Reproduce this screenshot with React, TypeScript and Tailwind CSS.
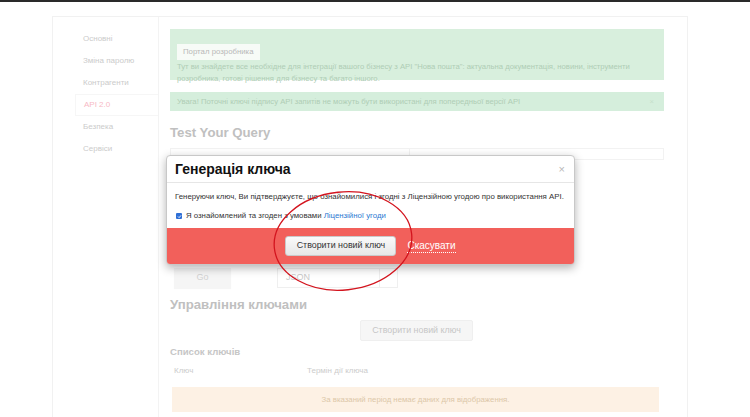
import React from "react";

const font = { fontFamily: '"Liberation Sans", Arial, "Noto Sans", sans-serif' };

export default function App() {
  const side = ["Основні", "Зміна паролю", "Контрагенти", "API 2.0", "Безпека", "Сервіси"];
  return (
    <div className="relative w-[750px] h-[417px] overflow-hidden bg-white" style={font}>
      <div className="h-[2px] bg-[#2a2a2a]" />
      <div className="ml-[52px] mt-[14px] w-[636px] h-[420px] border border-[#f1f1f1] flex">
        {/* sidebar */}
        <div className="w-[106px] border-r border-[#f3f3f3] pt-[11px]">
          {side.map((s) =>
            s === "API 2.0" ? (
              <div
                key={s}
                className="h-[22px] flex items-center ml-[22px] pl-[8px] text-[8px] text-[#f7b9c5] border-y border-l border-[#f6f6f6]"
              >
                {s}
              </div>
            ) : (
              <div key={s} className="h-[22px] flex items-center pl-[30px] text-[8px] text-[#cbcbcb]">
                {s}
              </div>
            )
          )}
        </div>
        {/* content */}
        <div className="flex-1 pl-[11px] pr-[23px] pt-[12px] flex flex-col">
          <div className="h-[51px] bg-[#d8efdd] pl-[7px] pr-[20px] pt-[8px]">
            <div className="inline-flex h-[16px] items-center px-[6px] bg-[#f7fbf7] text-[7.8px] text-[#b8b8b8]">
              Портал розробника
            </div>
            <div className="text-[7.7px] leading-[12px] text-[#afcdb5]">
              Тут ви знайдете все необхідне для інтеграції вашого бізнесу з API "Нова пошта": актуальна документація, новини, інструменти розробника, готові рішення для бізнесу та багато іншого.
            </div>
          </div>
          <div className="mt-[12px] h-[19px] bg-[#d5eedc] pl-[7px] pr-[10px] flex items-center justify-between text-[7.7px] text-[#afcdb5]">
            <span>Увага! Поточні ключі підпису API запитів не можуть бути використані для попередньої версії API</span>
            <span className="text-[#c6dfca]">×</span>
          </div>
          <div className="mt-[14px] h-[16px] leading-[16px] text-[13.2px] font-bold text-[#c0c0c0]">Test Your Query</div>
          <div className="mt-[7px] h-[12px] flex">
            <div className="w-[240px] border border-[#f2f2f2]" />
            <div className="flex-1 border border-[#f2f2f2] border-l-0" />
          </div>
          <div className="mt-[108px] h-[20px] flex items-center">
            <div className="ml-[4px] w-[57px] h-[20px] bg-[#f5f5f5] shadow-[0_1px_1px_rgba(0,0,0,0.04)] flex items-center justify-center text-[9px] text-[#d2d2d2]">
              Go
            </div>
            <div className="ml-[46px] w-[103px] h-[20px] border border-[#efefef] flex items-center pl-[8px] text-[9px] text-[#c8c8c8]">
              JSON
            </div>
            <div className="w-[18px] h-[20px] border border-l-0 border-[#efefef]" />
          </div>
          <div className="mt-[9px] h-[16px] leading-[16px] text-[13.2px] font-bold text-[#c0c0c0]">Управління ключами</div>
          <div className="mt-[7px] h-[21px] flex">
            <div className="ml-[190px] w-[113px] h-[21px] bg-[#f6f6f6] border border-[#efefef] rounded-[2px] flex items-center justify-center text-[8.9px] text-[#c6c6c6]">
              Створити новий ключ
            </div>
          </div>
          <div className="mt-[5px] h-[12px] leading-[12px] text-[9.6px] font-bold text-[#c6c6c6]">Список ключів</div>
          <div className="mt-[7px] h-[12px] flex items-center text-[8px] text-[#cccccc]">
            <span className="ml-[4px] w-[133px]">Ключ</span>
            <span>Термін дії ключа</span>
          </div>
          <div className="mt-[10px] ml-[2px] w-[487px] h-[25px] bg-[#fdf1e4] flex items-center justify-center text-[7.8px] text-[#dcc7a8]">
            За вказаний період немає даних для відображення.
          </div>
        </div>
      </div>

      {/* modal */}
      <div className="absolute left-[166px] top-[155px] w-[409px] h-[110px] bg-white border border-[#c8c8c8] rounded-[4px] shadow-[0_3px_10px_rgba(0,0,0,0.3)] overflow-hidden flex flex-col">
        <div className="h-[27px] border-b border-[#e6e6e6] flex items-center justify-between pl-[8px] pr-[9px]">
          <span className="text-[14px] font-bold text-[#111]">Генерація ключа</span>
          <span className="text-[11px] text-[#b8b8b8]">×</span>
        </div>
        <div className="h-[20px] mt-[4px] flex items-center pl-[8px] text-[7.85px] text-[#333] whitespace-nowrap">
          Генеруючи ключ, Ви підтверджуєте, що ознайомилися і згодні з Ліцензійною угодою про використання API.
        </div>
        <div className="h-[18px] flex items-center pl-[9px] text-[7.8px] text-[#333]">
          <span className="w-[6px] h-[6px] mr-[4px] rounded-[1px] bg-[#2f6fd6] flex items-center justify-center">
            <svg width="5" height="5" viewBox="0 0 10 10">
              <path d="M2 5 L4.2 7.2 L8 2.8" stroke="white" strokeWidth="1.8" fill="none" />
            </svg>
          </span>
          Я ознайомлений та згоден з умовами&nbsp;<span className="text-[#2b79d2]">Ліцензійної угоди</span>
        </div>
        <div className="mt-auto h-[36px] bg-[#f2605b] flex items-center justify-center gap-[11px]">
          <div className="w-[111px] h-[20px] rounded-[3px] border border-[#c9c9c9] bg-gradient-to-b from-[#fafafa] to-[#e7e7e7] flex items-center justify-center text-[8.9px] text-[#333]">
            Створити новий ключ
          </div>
          <span className="text-[10px] text-white border-b border-dotted border-white leading-[12px]">Скасувати</span>
        </div>
      </div>

      {/* annotation ellipse */}
      <svg className="absolute left-0 top-0 pointer-events-none" width="750" height="417">
        <ellipse cx="343" cy="241" rx="69" ry="49" fill="none" stroke="#d3141e" strokeWidth="1.3" transform="rotate(-6 343 241)" />
      </svg>
    </div>
  );
}
